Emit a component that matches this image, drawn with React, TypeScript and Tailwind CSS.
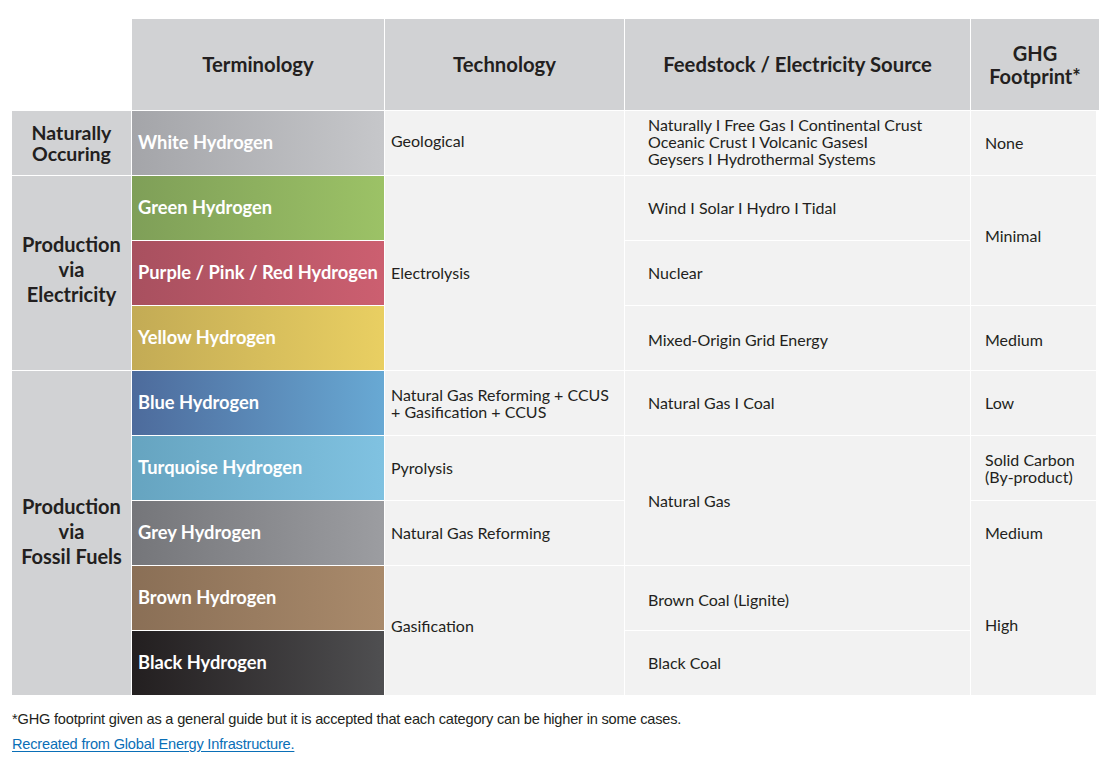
import React from "react";

const ink = "text-[#231f20]";

// left-to-right gradients for the terminology column
const colours = [
  { label: "White Hydrogen", bg: "bg-gradient-to-r from-[#a4a5a9] to-[#c6c7ca]" },
  { label: "Green Hydrogen", bg: "bg-gradient-to-r from-[#7f9f58] to-[#9cc266]" },
  { label: "Purple / Pink / Red Hydrogen", bg: "bg-gradient-to-r from-[#a8505f] to-[#cc5f70]" },
  { label: "Yellow Hydrogen", bg: "bg-gradient-to-r from-[#c3ab55] to-[#e9cf62]" },
  { label: "Blue Hydrogen", bg: "bg-gradient-to-r from-[#4d6b9c] to-[#68a9d4]" },
  { label: "Turquoise Hydrogen", bg: "bg-gradient-to-r from-[#66a4c0] to-[#80c2e1]" },
  { label: "Grey Hydrogen", bg: "bg-gradient-to-r from-[#75767a] to-[#9c9da1]" },
  { label: "Brown Hydrogen", bg: "bg-gradient-to-r from-[#8a6f56] to-[#a98a6b]" },
  { label: "Black Hydrogen", bg: "bg-gradient-to-r from-[#231f20] to-[#4f4f51]" },
];

function Cell({ className = "", children }: { className?: string; children?: React.ReactNode }) {
  return <div className={`flex items-center bg-[#f2f2f2] text-[16px] ${ink} ${className}`}>{children}</div>;
}

export default function App() {
  return (
    <div className="w-[1112px] h-[766px] bg-white font-['Lato',sans-serif] overflow-hidden">
      <div className="pl-3 pt-[19px]">
        <div className="grid w-[1084px] grid-cols-[119px_252px_239px_345px_125px] grid-rows-[91px_repeat(9,64px)] gap-px bg-white">
          {/* Header */}
          <div className="bg-white" />
          {["Terminology", "Technology", "Feedstock / Electricity Source"].map((h) => (
            <div key={h} className={`flex items-center justify-center bg-[#d1d2d4] text-[20.3px] font-bold ${ink}`}>
              {h}
            </div>
          ))}
          <div className={`-mr-[3px] flex flex-col items-center justify-center bg-[#d1d2d4] text-[20px] font-bold leading-[23px] ${ink}`}>
            <span>GHG</span>
            <span>Footprint*</span>
          </div>

          {/* Category column */}
          <div className={`col-start-1 row-start-2 flex flex-col items-center justify-center bg-[#d1d2d4] text-center text-[19.5px] font-bold leading-[21px] ${ink}`}>
            <span>Naturally</span>
            <span>Occuring</span>
          </div>
          <div className={`col-start-1 row-start-3 row-span-3 flex flex-col items-center justify-center bg-[#d1d2d4] pb-[8px] text-center text-[20px] font-bold leading-[25px] ${ink}`}>
            <span>Production</span>
            <span>via</span>
            <span>Electricity</span>
          </div>
          <div className={`col-start-1 row-start-6 row-span-5 flex flex-col items-center justify-center bg-[#d1d2d4] pb-[4px] text-center text-[20px] font-bold leading-[25px] ${ink}`}>
            <span>Production</span>
            <span>via</span>
            <span>Fossil Fuels</span>
          </div>

          {/* Terminology */}
          {colours.map((c, i) => (
            <div
              key={c.label}
              style={{ gridRowStart: i + 2 }}
              className={`col-start-2 flex items-center pl-[6px] text-[18.3px] font-bold text-white ${c.bg}`}
            >
              {c.label}
            </div>
          ))}

          {/* Technology */}
          <Cell className="col-start-3 row-start-2 pl-[6px] pb-[4px]">Geological</Cell>
          <Cell className="col-start-3 row-start-3 row-span-3 pl-[6px]">Electrolysis</Cell>
          <Cell className="col-start-3 row-start-6 pl-[6px] leading-[17px]">
            <div>
              <div>Natural Gas Reforming + CCUS</div>
              <div>+ Gasification + CCUS</div>
            </div>
          </Cell>
          <Cell className="col-start-3 row-start-7 pl-[6px]">Pyrolysis</Cell>
          <Cell className="col-start-3 row-start-8 pl-[6px]">Natural Gas Reforming</Cell>
          <Cell className="col-start-3 row-start-9 row-span-2 pl-[6px] pb-[10px]">Gasification</Cell>

          {/* Feedstock / Electricity Source */}
          <Cell className="col-start-4 row-start-2 pl-[23px] pb-[4px] leading-[17px]">
            <div>
              <div>Naturally I Free Gas I Continental Crust</div>
              <div>Oceanic Crust I Volcanic GasesI</div>
              <div>Geysers I Hydrothermal Systems</div>
            </div>
          </Cell>
          <Cell className="col-start-4 row-start-3 pl-[23px]">Wind I Solar I Hydro I Tidal</Cell>
          <Cell className="col-start-4 row-start-4 pl-[23px]">Nuclear</Cell>
          <Cell className="col-start-4 row-start-5 pl-[23px] pt-[4px]">Mixed-Origin Grid Energy</Cell>
          <Cell className="col-start-4 row-start-6 pl-[23px]">Natural Gas I Coal</Cell>
          <Cell className="col-start-4 row-start-7 row-span-2 pl-[23px]">Natural Gas</Cell>
          <Cell className="col-start-4 row-start-9 pl-[23px] pt-[4px]">Brown Coal (Lignite)</Cell>
          <Cell className="col-start-4 row-start-10 pl-[23px]">Black Coal</Cell>

          {/* GHG Footprint */}
          <Cell className="col-start-5 row-start-2 pl-[14px]">None</Cell>
          <Cell className="col-start-5 row-start-3 row-span-2 pl-[14px] pb-[10px]">Minimal</Cell>
          <Cell className="col-start-5 row-start-5 pl-[14px] pt-[4px]">Medium</Cell>
          <Cell className="col-start-5 row-start-6 pl-[14px]">Low</Cell>
          <Cell className="col-start-5 row-start-7 pl-[14px] leading-[17px]">
            <div>
              <div>Solid Carbon</div>
              <div>(By-product)</div>
            </div>
          </Cell>
          <div className={`col-start-5 row-start-8 row-span-3 flex flex-col bg-[#f2f2f2] pl-[14px] text-[16px] ${ink}`}>
            <div className="flex h-[64px] items-center">Medium</div>
            <div className="flex flex-1 items-center pb-[10px]">High</div>
          </div>
        </div>

        <div className={`mt-[14px] font-['Liberation_Sans',sans-serif] text-[14.6px] tracking-[-0.2px] ${ink}`}>
          *GHG footprint given as a general guide but it is accepted that each category can be higher in some cases.
        </div>
        <a
          href="#"
          className="mt-[3px] inline-block font-['Liberation_Sans',sans-serif] text-[14.6px] tracking-[-0.2px] text-[#0a6fb7] underline underline-offset-2"
        >
          Recreated from Global Energy Infrastructure.
        </a>
      </div>
    </div>
  );
}
